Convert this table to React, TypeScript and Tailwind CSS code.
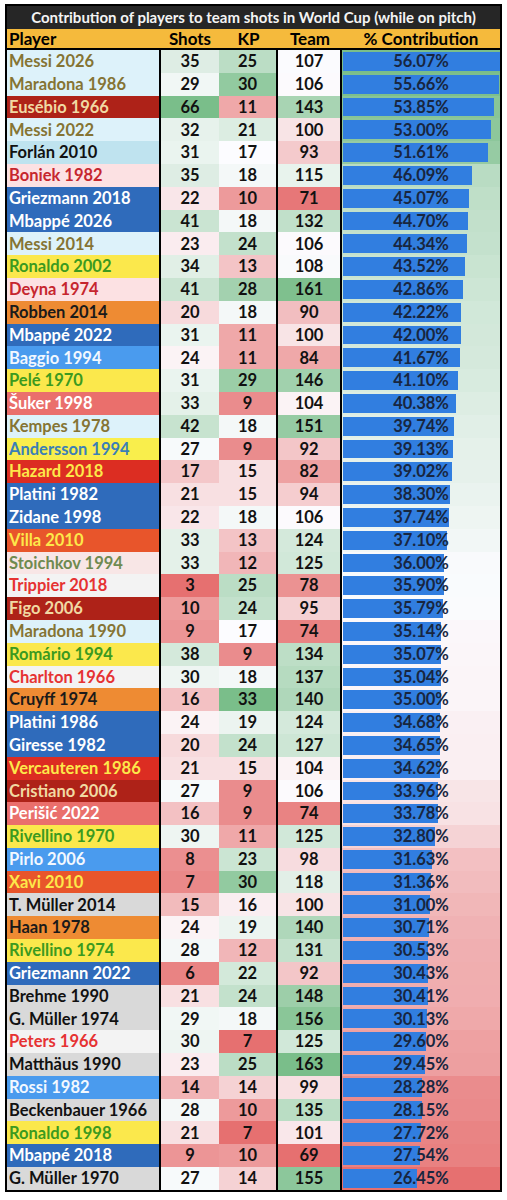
import React from 'react'

type Row = [string, number, number, number, number, string]

const rows: Row[] = [
  ['Messi 2026', 35, 25, 107, 56.07, 'ARG'],
  ['Maradona 1986', 29, 30, 106, 55.66, 'ARG'],
  ['Eusébio 1966', 66, 11, 143, 53.85, 'POR'],
  ['Messi 2022', 32, 21, 100, 53.0, 'ARG'],
  ['Forlán 2010', 31, 17, 93, 51.61, 'URU'],
  ['Boniek 1982', 35, 18, 115, 46.09, 'POL'],
  ['Griezmann 2018', 22, 10, 71, 45.07, 'FRA'],
  ['Mbappé 2026', 41, 18, 132, 44.7, 'FRA'],
  ['Messi 2014', 23, 24, 106, 44.34, 'ARG'],
  ['Ronaldo 2002', 34, 13, 108, 43.52, 'BRA'],
  ['Deyna 1974', 41, 28, 161, 42.86, 'POL'],
  ['Robben 2014', 20, 18, 90, 42.22, 'NED'],
  ['Mbappé 2022', 31, 11, 100, 42.0, 'FRA'],
  ['Baggio 1994', 24, 11, 84, 41.67, 'ITA'],
  ['Pelé 1970', 31, 29, 146, 41.1, 'BRA'],
  ['Šuker 1998', 33, 9, 104, 40.38, 'CRO'],
  ['Kempes 1978', 42, 18, 151, 39.74, 'ARG'],
  ['Andersson 1994', 27, 9, 92, 39.13, 'SWE'],
  ['Hazard 2018', 17, 15, 82, 39.02, 'BEL'],
  ['Platini 1982', 21, 15, 94, 38.3, 'FRA'],
  ['Zidane 1998', 22, 18, 106, 37.74, 'FRA'],
  ['Villa 2010', 33, 13, 124, 37.1, 'ESP'],
  ['Stoichkov 1994', 33, 12, 125, 36.0, 'BUL'],
  ['Trippier 2018', 3, 25, 78, 35.9, 'ENG'],
  ['Figo 2006', 10, 24, 95, 35.79, 'POR'],
  ['Maradona 1990', 9, 17, 74, 35.14, 'ARG'],
  ['Romário 1994', 38, 9, 134, 35.07, 'BRA'],
  ['Charlton 1966', 30, 18, 137, 35.04, 'ENG'],
  ['Cruyff 1974', 16, 33, 140, 35.0, 'NED'],
  ['Platini 1986', 24, 19, 124, 34.68, 'FRA'],
  ['Giresse 1982', 20, 24, 127, 34.65, 'FRA'],
  ['Vercauteren 1986', 21, 15, 104, 34.62, 'BEL'],
  ['Cristiano 2006', 27, 9, 106, 33.96, 'POR'],
  ['Perišić 2022', 16, 9, 74, 33.78, 'CRO'],
  ['Rivellino 1970', 30, 11, 125, 32.8, 'BRA'],
  ['Pirlo 2006', 8, 23, 98, 31.63, 'ITA'],
  ['Xavi 2010', 7, 30, 118, 31.36, 'ESP'],
  ['T. Müller 2014', 15, 16, 100, 31.0, 'GER'],
  ['Haan 1978', 24, 19, 140, 30.71, 'NED'],
  ['Rivellino 1974', 28, 12, 131, 30.53, 'BRA'],
  ['Griezmann 2022', 6, 22, 92, 30.43, 'FRA'],
  ['Brehme 1990', 21, 24, 148, 30.41, 'GER'],
  ['G. Müller 1974', 29, 18, 156, 30.13, 'GER'],
  ['Peters 1966', 30, 7, 125, 29.6, 'ENG'],
  ['Matthäus 1990', 23, 25, 163, 29.45, 'GER'],
  ['Rossi 1982', 14, 14, 99, 28.28, 'ITA'],
  ['Beckenbauer 1966', 28, 10, 135, 28.15, 'GER'],
  ['Ronaldo 1998', 21, 7, 101, 27.72, 'BRA'],
  ['Mbappé 2018', 9, 10, 69, 27.54, 'FRA'],
  ['G. Müller 1970', 27, 14, 155, 26.45, 'GER'],
]

// team colours for the player column
const teams: Record<string, string> = {
  ARG: 'bg-[#ddf2fa] text-[#857433]',
  POR: 'bg-[#ae2218] text-[#f1d9a3]',
  URU: 'bg-[#bfe3ef] text-[#111]',
  POL: 'bg-[#fce1e3] text-[#c6262e]',
  FRA: 'bg-[#2f6bbb] text-white',
  BRA: 'bg-[#fbe84c] text-[#3c9a1f]',
  NED: 'bg-[#ee8b33] text-[#1a1a1a]',
  ITA: 'bg-[#4a9bee] text-[#f2f8ff]',
  CRO: 'bg-[#ea6f6c] text-white',
  SWE: 'bg-[#f9ee4c] text-[#3b7fb6]',
  BEL: 'bg-[#dc2d22] text-[#fde84a]',
  ESP: 'bg-[#e8552b] text-[#fde84a]',
  BUL: 'bg-[#f8e6e6] text-[#6f8a50]',
  ENG: 'bg-[#f3f3f3] text-[#e63232]',
  GER: 'bg-[#d9d9d9] text-[#111]',
}

const RED = [230, 112, 112]
const WHITE = [252, 252, 255]
const GREEN = [122, 190, 138]

function median(xs: number[]) {
  const s = [...xs].sort((a, b) => a - b)
  const m = Math.floor(s.length / 2)
  return s.length % 2 ? s[m] : (s[m - 1] + s[m]) / 2
}

function mix(a: number[], b: number[], t: number) {
  const c = a.map((x, i) => Math.round(x + (b[i] - x) * t))
  return `rgb(${c[0]},${c[1]},${c[2]})`
}

function scaler(xs: number[]) {
  const min = Math.min(...xs)
  const max = Math.max(...xs)
  const mid = median(xs)
  return (v: number) =>
    v >= mid ? mix(WHITE, GREEN, (v - mid) / (max - mid || 1)) : mix(WHITE, RED, (mid - v) / (mid - min || 1))
}

const shotsColor = scaler(rows.map((r) => r[1]))
const kpColor = scaler(rows.map((r) => r[2]))
const teamColor = scaler(rows.map((r) => r[3]))
const pctColor = scaler(rows.map((r) => r[4]))
const maxPct = Math.max(...rows.map((r) => r[4]))

export default function App() {
  return (
    <div className="min-h-[1200px] w-[507px] bg-white pt-[4px] pl-[5px] font-['Lato','Liberation_Sans',sans-serif] font-bold">
      <div className="w-[497px] border-2 border-black">
        <div className="flex h-[23px] items-center justify-center bg-[#262626] text-[15px] leading-none text-[#f4f4f4]">
          Contribution of players to team shots in World Cup (while on pitch)
        </div>
        <div className="flex h-[21px] items-center border-b-2 border-black bg-[#f5ba3c] text-[17px] leading-none text-black">
          <div className="w-[154px] pl-[2px]">Player</div>
          <div className="w-[58px] text-center">Shots</div>
          <div className="w-[59px] text-center">KP</div>
          <div className="w-[64px] text-center">Team</div>
          <div className="flex-1 text-center">% Contribution</div>
        </div>
        {rows.map(([name, shots, kp, team, pct, code]) => (
          <div key={name} className="flex h-[22.8px] text-[16.5px] leading-none">
            <div className={`flex w-[154px] items-center border-r-2 border-black pl-[2px] ${teams[code]}`}>{name}</div>
            <div className="flex w-[58px] items-center justify-center text-[#111]" style={{ background: shotsColor(shots) }}>
              {shots}
            </div>
            <div
              className="flex w-[59px] items-center justify-center border-r-2 border-black text-[#111]"
              style={{ background: kpColor(kp) }}
            >
              {kp}
            </div>
            <div
              className="flex w-[64px] items-center justify-center border-r-2 border-black text-[#111]"
              style={{ background: teamColor(team) }}
            >
              {team}
            </div>
            <div className="relative flex-1 py-[2px] pl-[1px]" style={{ background: pctColor(pct) }}>
              <div className="h-full bg-[#317ee0]" style={{ width: `${(pct / maxPct) * 100}%` }} />
              <div className="absolute inset-0 flex items-center justify-center text-[#18263f]">{pct.toFixed(2)}%</div>
            </div>
          </div>
        ))}
      </div>
    </div>
  )
}
